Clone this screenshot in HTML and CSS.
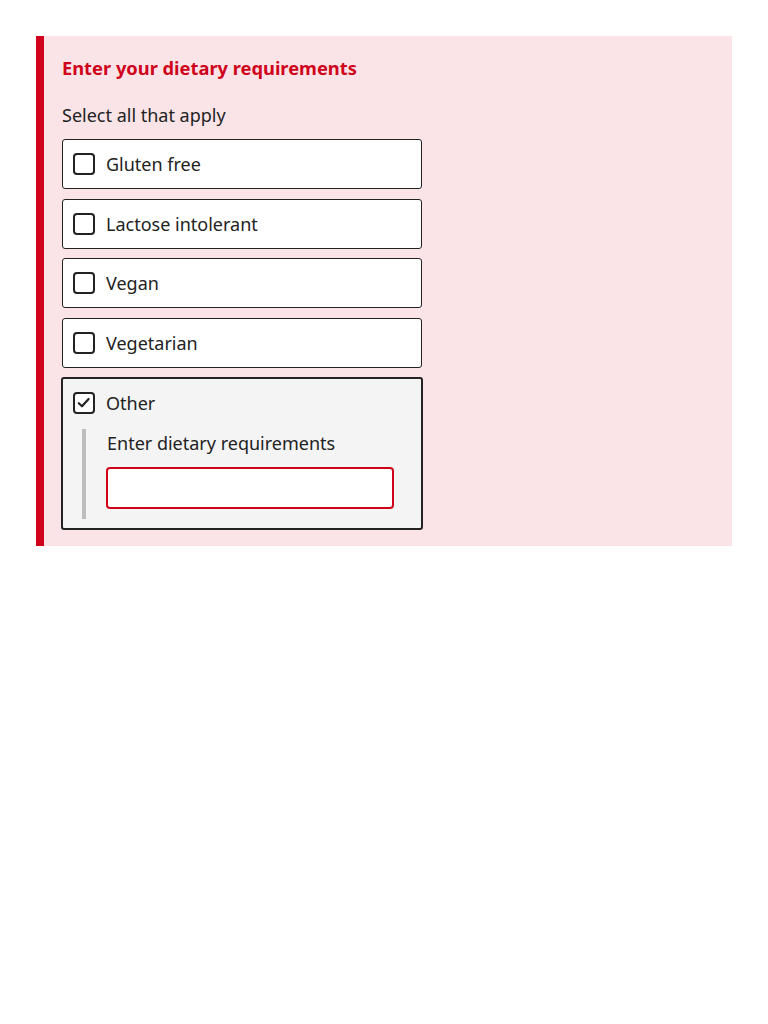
FILE: index.html
```html
<!DOCTYPE html>
<html lang="en">
<head>
<meta charset="utf-8">
<title>Dietary requirements</title>
<link rel="stylesheet" href="styles.css">
</head>
<body>
<div class="error-panel">
  <h2 class="error-title">Enter your dietary requirements</h2>
  <div class="group" role="group">
    <div class="hint">Select all that apply</div>
    <div class="options">
      <label class="option"><span class="box"></span><span class="text">Gluten free</span></label>
      <label class="option"><span class="box"></span><span class="text">Lactose intolerant</span></label>
      <label class="option"><span class="box"></span><span class="text">Vegan</span></label>
      <label class="option"><span class="box"></span><span class="text">Vegetarian</span></label>
      <div class="option option-open">
        <div class="option-row">
          <span class="box checked"><svg viewBox="0 0 18 18" width="18" height="18"><path d="M3.8 9.2 L7 12.2 L13.6 5" fill="none" stroke="#222" stroke-width="2.2" stroke-linecap="round" stroke-linejoin="round"/></svg></span>
          <span class="text">Other</span>
        </div>
        <div class="reveal">
          <div class="reveal-label">Enter dietary requirements</div>
          <div class="input"></div>
        </div>
      </div>
    </div>
  </div>
</div>
</body>
</html>
```
FILE: styles.css
```css
* { box-sizing: border-box; }
html, body { margin: 0; padding: 0; background: #fff; }
body {
  padding: 36px;
  font-family: "Noto Sans", "Open Sans", sans-serif;
  color: #222;
}
.error-panel {
  background: #fae4e7;
  border-left: 8px solid #d0021b;
  padding: 16px 18px 16px 18px;
}
.error-title {
  margin: 0;
  color: #d0021b;
  font-size: 18.3px;
  font-weight: 700;
  line-height: 32px;
}
.hint {
  margin-top: 18px;
  font-size: 18px;
  line-height: 26px;
}
.options {
  margin-top: 11px;
  width: 360px;
  display: flex;
  flex-direction: column;
  gap: 9.5px;
}
.option {
  display: flex;
  align-items: center;
  height: 50px;
  background: #fff;
  border: 1px solid #222;
  border-radius: 3px;
  padding-left: 10px;
  font-size: 18px;
}
.box {
  width: 22px;
  height: 22px;
  border: 2px solid #222;
  border-radius: 4px;
  background: #fff;
  flex: none;
  display: flex;
  align-items: center;
  justify-content: center;
}
.text { margin-left: 11px; line-height: 24px; }
.option-open {
  display: block;
  height: auto;
  width: 362px;
  margin-left: -1px;
  border: 2px solid #222;
  background: #f4f4f4;
  padding: 12px 28px 9px 10px;
}
.option-row {
  display: flex;
  align-items: center;
  height: 24px;
}
.reveal {
  margin-top: 14px;
  margin-left: 9px;
  border-left: 4px solid #bdbdbd;
  padding: 0 0 10px 20px;
}
.reveal-label {
  font-size: 18px;
  line-height: 28px;
  padding-left: 1px;
}
.input {
  margin-top: 10px;
  width: 288px;
  height: 42px;
  background: #fff;
  border: 2px solid #d0021b;
  border-radius: 4px;
}
```
